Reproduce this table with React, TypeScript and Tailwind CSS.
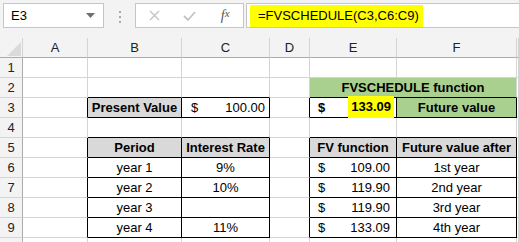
import type { ReactNode } from 'react'

// Spreadsheet view: formula bar on top, then a small grid with two tables

const font = "font-['Liberation_Sans',Arial,sans-serif]"

type CellSpec = {
  content?: ReactNode
  bg?: string
  rb?: boolean // black right edge
  bb?: boolean // black bottom edge
  span?: boolean
  align?: 'left' | 'center' | 'right'
  bold?: boolean
}

function Money({ value, pl = 'pl-[8px]', pr = 'pr-[6px]', mark }: { value: string; pl?: string; pr?: string; mark?: boolean }) {
  return (
    <div className={`flex w-full items-center justify-between ${pl} ${pr}`}>
      <span>$</span>
      {mark ? (
        <span className="relative -top-[1px] flex h-[22px] items-center bg-[#ffff00] px-[3px]">{value}</span>
      ) : (
        <span>{value}</span>
      )}
    </div>
  )
}

function Cell({ c }: { c: CellSpec }) {
  const right = c.rb ? 'border-r-black' : 'border-r-[#d4d4d4]'
  const bottom = c.bb ? 'border-b-black' : 'border-b-[#d4d4d4]'
  const align =
    c.align === 'left' ? 'justify-start' : c.align === 'right' ? 'justify-end' : 'justify-center'
  return (
    <div
      className={`flex h-[20px] items-center overflow-visible whitespace-nowrap border-r border-b text-[13px] text-black ${right} ${bottom} ${align} ${c.bg ?? 'bg-white'} ${c.bold ? 'font-bold' : ''} ${c.span ? 'col-span-2' : ''}`}
    >
      {c.content}
    </div>
  )
}

const gray = 'bg-[#d9d9d9]'
const green = 'bg-[#a9d08e]'

// one array per row: A, B, C, D, E, F, G (E2:F2 merged)
const rows: CellSpec[][] = [
  [{}, {}, {}, {}, {}, {}, {}],
  [{}, { bb: true }, { bb: true }, {}, { content: 'FVSCHEDULE function', bg: green, bold: true, bb: true, span: true }, {}],
  [
    { rb: true },
    { content: 'Present Value', bg: gray, bold: true, rb: true, bb: true },
    { content: <Money value="100.00" pl="pl-[9px]" pr="pr-[4px]" />, rb: true, bb: true },
    { rb: true },
    { content: <Money value="133.09" pr="pr-[2px]" mark />, rb: true, bb: true, bold: true },
    { content: 'Future value', bg: green, bold: true, rb: true, bb: true },
    {},
  ],
  [{}, { bb: true }, { bb: true }, {}, { bb: true }, { bb: true }, {}],
  [
    { rb: true },
    { content: 'Period', bg: gray, bold: true, rb: true, bb: true },
    { content: 'Interest Rate', bg: gray, bold: true, rb: true, bb: true },
    { rb: true },
    { content: 'FV function', bg: gray, bold: true, rb: true, bb: true },
    { content: 'Future value after', bg: gray, bold: true, rb: true, bb: true },
    {},
  ],
  ...[
    ['year 1', '9%', '109.00', '1st year'],
    ['year 2', '10%', '119.90', '2nd year'],
    ['year 3', '', '119.90', '3rd year'],
    ['year 4', '11%', '133.09', '4th year'],
  ].map(([period, rate, fv, label]) => [
    { rb: true },
    { content: period, rb: true, bb: true },
    { content: rate, rb: true, bb: true },
    { rb: true },
    { content: <Money value={fv} />, rb: true, bb: true },
    { content: label, rb: true, bb: true },
    {},
  ]),
  [{}, {}, {}, {}, {}, {}, {}],
]

const columns = ['A', 'B', 'C', 'D', 'E', 'F', '']

function FormulaBar() {
  return (
    <div className={`flex h-[38px] items-start bg-[#f3f3f3] pt-[3px] ${font}`}>
      {/* name box */}
      <div className="ml-[3px] flex h-[25px] w-[101px] items-center justify-between border border-[#c6c6c6] bg-white pl-[7px] pr-[8px] text-[13px] text-black">
        <span>E3</span>
        <svg width="9" height="5" viewBox="0 0 9 5">
          <path d="M0 0h9L4.5 5z" fill="#707070" />
        </svg>
      </div>
      {/* grip dots */}
      <div className="flex w-[31px] flex-col items-center gap-[3px] pt-[8px]">
        <span className="h-[2px] w-[2px] bg-[#a8a8a8]" />
        <span className="h-[2px] w-[2px] bg-[#a8a8a8]" />
        <span className="h-[2px] w-[2px] bg-[#a8a8a8]" />
      </div>
      {/* cancel / enter / insert function */}
      <div className="flex h-[25px] w-[109px] items-center border border-[#c6c6c6] bg-white">
        <div className="flex w-[36px] justify-center pl-[2px]">
          <svg width="11" height="11" viewBox="0 0 11 11">
            <path d="M1 1l9 9M10 1l-9 9" stroke="#c4c4c4" strokeWidth="1.4" />
          </svg>
        </div>
        <div className="flex w-[36px] justify-center">
          <svg width="13" height="10" viewBox="0 0 13 10">
            <path d="M1 5l4 4 7-8" stroke="#c4c4c4" strokeWidth="1.8" fill="none" />
          </svg>
        </div>
        <div className="flex w-[36px] justify-center font-['Liberation_Serif',serif] text-[14px] italic text-[#555]">
          f<span className="text-[11px]">x</span>
        </div>
      </div>
      {/* formula */}
      <div className="ml-[2px] flex h-[25px] flex-1 items-center border-y border-l border-[#c6c6c6] bg-white pl-[3px]">
        <span className="flex h-[22px] items-center bg-[#ffff00] pl-[8px] pr-[4px] text-[13px] text-black">
          =FVSCHEDULE(C3,C6:C9)
        </span>
      </div>
    </div>
  )
}

export default function App() {
  return (
    <div className={`h-[242px] w-[519px] overflow-hidden bg-white ${font}`}>
      <FormulaBar />
      <div className="grid grid-cols-[23px_65px_94px_88px_40px_87px_120px_2px]">
        {/* corner */}
        <div className="flex h-[20px] items-end justify-end border-r border-b border-r-[#d4d4d4] border-b-[#ababab] bg-[#f3f3f3] pb-[1px] pr-[1px]">
          <svg width="14" height="14" viewBox="0 0 14 14">
            <path d="M14 0v14H0z" fill="#dadada" />
          </svg>
        </div>
        {columns.map((col, i) => (
          <div
            key={i}
            className="flex h-[20px] items-center justify-center border-r border-b border-r-[#d4d4d4] border-b-[#ababab] bg-[#f3f3f3] text-[13px] text-[#222]"
          >
            {col}
          </div>
        ))}
        {rows.map((row, r) => (
          <div key={r} className="contents">
            {/* the last row is only partly in view, so its number is left out */}
            <div className="flex h-[20px] items-center justify-center border-r border-b border-r-[#ababab] border-b-[#d4d4d4] bg-[#f3f3f3] text-[13px] text-[#222]">
              {r < rows.length - 1 ? r + 1 : null}
            </div>
            {row.map((c, i) => (
              <Cell key={i} c={c} />
            ))}
          </div>
        ))}
      </div>
    </div>
  )
}
